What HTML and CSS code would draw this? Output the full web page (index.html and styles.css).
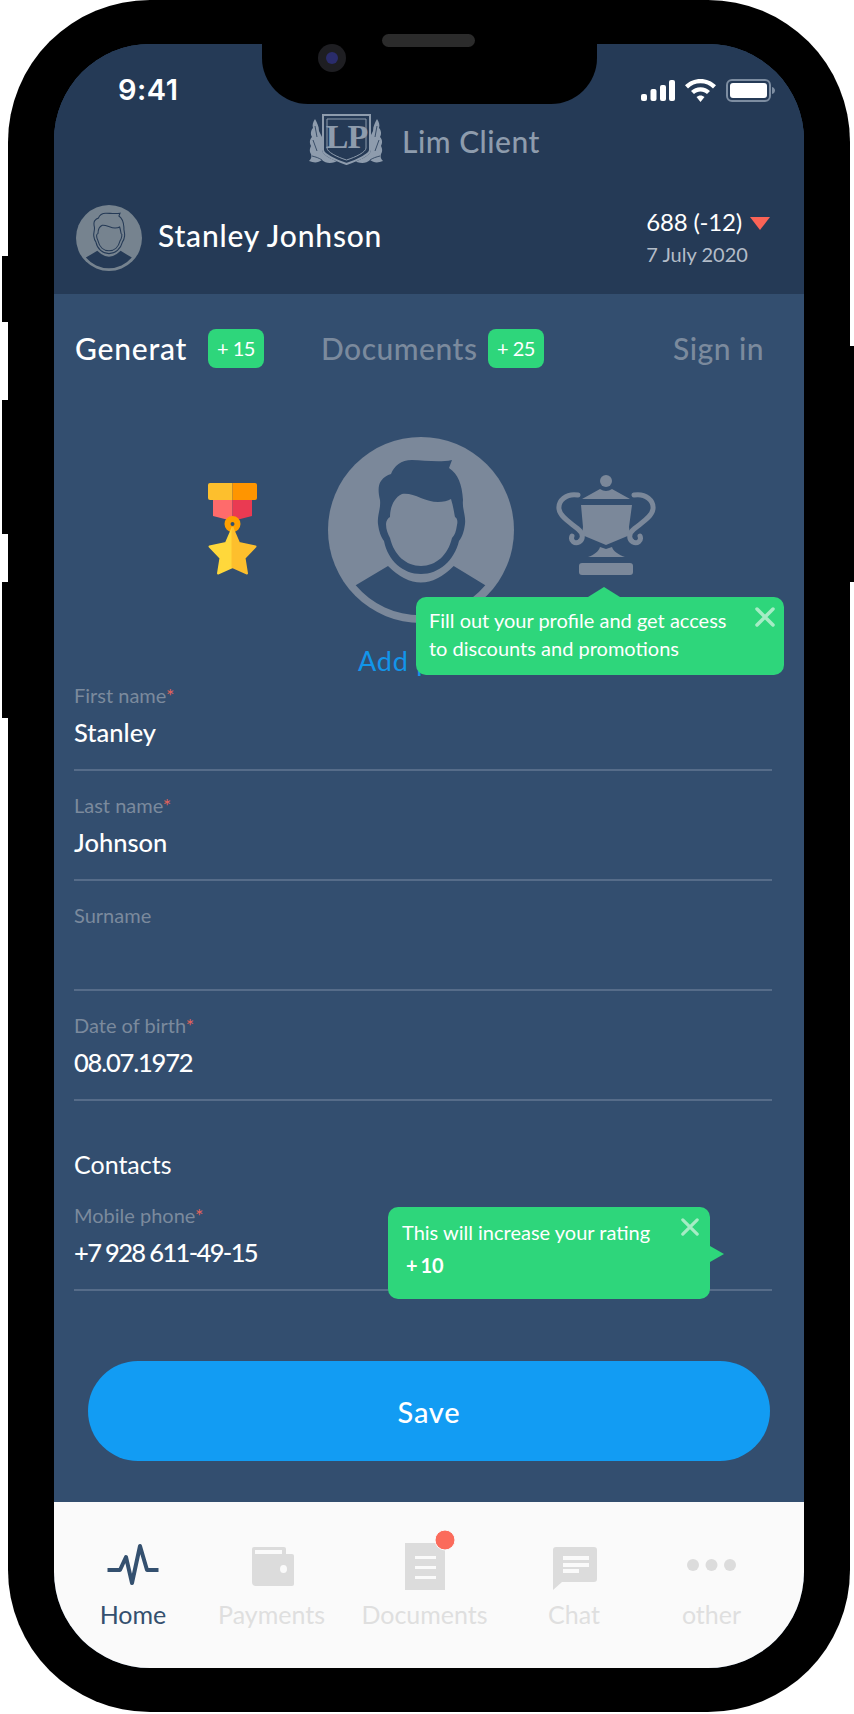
FILE: index.html
```html
<!DOCTYPE html>
<html lang="en">
<head>
<meta charset="utf-8">
<title>Lim Client</title>
<link rel="stylesheet" href="styles.css">
</head>
<body>
<svg class="defs" width="0" height="0" aria-hidden="true">
  <symbol id="person" viewBox="0 0 186 186">
    <circle class="av-bg" cx="93" cy="93" r="93"/>
    <path class="av-body" d="M27.7 148.3L60 129Q93 162 125.7 129L157.3 148.3A85 85 0 0 1 27.7 148.3Z"/>
    <path class="av-head" d="M50 87C49 78 53 72 52 63C50 55 50 48 53 44C56 40 59 38 63 37C66 29 73 23 84 23C96 23 110 26 124 23L121 31C130 37 134 47 135 63C134 72 138 78 137 87C136 95 134 100 131 104C126 124 111 137 93 137C75 137 60 124 56 104C53 100 51 95 50 87Z"/>
    <path class="av-face" d="M58 87C58 84 60 81 62 80C62 72 65 61 74 57C85 55 97 65 110 65C115 65 120 64 123 62C125 68 126 75 127 80C129 81 130 84 129 88C128 94 127 98 124 101C120 118 108 129 93 129C78 129 66 118 62 101C60 97 58 93 58 87Z"/>
  </symbol>
</svg>
<div class="device">
  <span class="btn btn-l1"></span>
  <span class="btn btn-l2"></span>
  <span class="btn btn-l3"></span>
  <span class="btn btn-r1"></span>
  <div class="screen">
    <div class="notch">
      <span class="camera"><span class="lens"></span></span>
    </div>

    <header class="top">
      <div class="status">
        <span class="time">9:41</span>
        <div class="status-icons">
          <svg class="i-signal" viewBox="0 0 34 21"><rect x="0" y="14" width="6" height="7" rx="2"/><rect x="9.500" y="9" width="6" height="12" rx="2"/><rect x="19" y="5" width="6" height="16" rx="2"/><rect x="28" y="0" width="6" height="21" rx="2"/></svg>
          <svg class="i-wifi" viewBox="0 0 31 23"><path d="M15.500 0C21.500 0 27 2.300 31 6.300L28 9.400C24.800 6.200 20.400 4.300 15.500 4.300S6.200 6.200 3 9.400L0 6.300C4 2.300 9.500 0 15.500 0Z"/><path d="M15.500 8.200C19.200 8.200 22.500 9.600 25 12L22 15.100C20.300 13.500 18 12.500 15.500 12.500S10.700 13.500 9 15.100L6 12C8.500 9.600 11.800 8.200 15.500 8.200Z"/><path d="M15.500 16.500C17 16.500 18.400 17.100 19.500 18.100L15.500 23L11.500 18.100C12.600 17.100 14 16.500 15.500 16.500Z"/></svg>
          <svg class="i-batt" viewBox="0 0 49 23"><rect class="batt-edge" x="1" y="1" width="43" height="21" rx="5"/><rect x="4" y="4" width="37" height="15" rx="3"/><path class="batt-nub" d="M46 8C48 8.500 49 10 49 11.500S48 14.500 46 15Z"/></svg>
        </div>
      </div>

      <div class="brand">
        <svg class="crest" viewBox="0 0 74 53">
          <g class="leaves">
            <path d="M6 6C8 10 10 13 10 18L13 24V36C15 40 20 44 30 47C24 51 17 51 13 47C9 50 5 50 0 48C2 46 3 44 2 41C0 38 1 35 2 33C0 29 1 26 3 24C1 21 2 17 4 15C3 12 4 9 6 6Z"/>
            <path transform="matrix(-1 0 0 1 74 0)" d="M6 6C8 10 10 13 10 18L13 24V36C15 40 20 44 30 47C24 51 17 51 13 47C9 50 5 50 0 48C2 46 3 44 2 41C0 38 1 35 2 33C0 29 1 26 3 24C1 21 2 17 4 15C3 12 4 9 6 6Z"/>
          </g>
          <g class="veins">
            <path d="M6 13L8 24M4 27L8 38M3 43C7 44 10 45 13 47"/>
            <path d="M68 13L66 24M70 27L66 38M71 43C67 44 64 45 61 47"/>
          </g>
          <path class="shield-fill" d="M13 1H62V37C62 42 50 48 37.500 52C25 48 13 42 13 37Z"/>
          <path class="shield-line s1" d="M14 2H61V37C61 41 49 47 37.500 51C26 47 14 41 14 37Z"/>
          <path class="shield-line s2" d="M18 6H57V35C57 39 47 44 37.500 47C28 44 18 39 18 35Z"/>
          <text class="crest-text" x="37.500" y="35" text-anchor="middle">LP</text>
        </svg>
        <span class="brand-name">Lim Client</span>
      </div>

      <div class="user">
        <svg class="user-avatar"><use href="#person"/></svg>
        <span class="user-name">Stanley Jonhson</span>
        <div class="rating">
          <div class="rating-line"><span>688 (-12)</span><span class="down"></span></div>
          <div class="rating-date">7 July 2020</div>
        </div>
      </div>
    </header>

    <main class="body">
      <nav class="tabs">
        <span class="tab tab-on">Generat</span>
        <span class="badge badge-a">+ 15</span>
        <span class="tab tab-docs">Documents</span>
        <span class="badge badge-b">+ 25</span>
        <span class="tab tab-sign">Sign in</span>
      </nav>

      <section class="awards">
        <svg class="medal" viewBox="0 0 49 92">
          <path fill="#ff6b6b" d="M5 17V33L24.500 38V17Z"/>
          <path fill="#ea3a52" d="M44 17V33L24.500 38V17Z"/>
          <path fill="#fdbf2d" d="M2 0H24.500V17H2A2 2 0 0 1 0 15V2A2 2 0 0 1 2 0Z"/>
          <path fill="#ff9500" d="M47 0H24.500V17H47A2 2 0 0 0 49 15V2A2 2 0 0 0 47 0Z"/>
          <circle cx="24.500" cy="41" r="5" fill="#32506f" stroke="#ffa000" stroke-width="6"/>
          <path fill="#ffd83b" stroke="#ffd83b" stroke-width="2" stroke-linejoin="round" d="M24.500 45L18 60L1.500 63.500L12.500 75L10 90.500L24.500 84Z"/>
          <path fill="#fdbf2d" stroke="#fdbf2d" stroke-width="2" stroke-linejoin="round" d="M24.500 45L31 60L47.500 63.500L36.500 75L39 90.500L24.500 84Z"/>
        </svg>
        <svg class="photo"><use href="#person"/></svg>
        <svg class="trophy" viewBox="0 0 100 100">
          <circle cx="50" cy="6" r="6"/>
          <path d="M26 24L44 14Q50 18 56 14L74 24Z"/>
          <path d="M25 30H76L73 52L74 60L50 70L26 60L27 52Z"/>
          <path d="M44 72L50 74L56 72C57 76 63 80 69 82H32C38 80 43 76 44 72Z"/>
          <rect x="23" y="88" width="54" height="12" rx="3"/>
          <path class="handle" d="M22 20C10 18 2 26 3 34C4 42 15 48 22 54C27 58 28 64 23 67C19 69 14 66 16 61"/>
          <path class="handle" d="M78 20C90 18 98 26 97 34C96 42 85 48 78 54C73 58 72 64 77 67C81 69 86 66 84 61"/>
        </svg>
      </section>
      <div class="add-photo">Add photo</div>

      <form class="fields">
        <div class="field"><div class="label">First name<i>*</i></div><div class="value">Stanley</div></div>
        <div class="field"><div class="label">Last name<i>*</i></div><div class="value">Johnson</div></div>
        <div class="field"><div class="label">Surname</div><div class="value"></div></div>
        <div class="field"><div class="label">Date of birth<i>*</i></div><div class="value value-date">08.07.1972</div></div>
        <div class="section-title">Contacts</div>
        <div class="field"><div class="label">Mobile phone<i>*</i></div><div class="value value-phone">+7 928 611-49-15</div></div>
      </form>

      <div class="save">Save</div>
    </main>

    <footer class="tabbar">
      <div class="item item-on">
        <svg class="nav-icon" viewBox="0 0 158 64"><polyline class="pulse" points="53.500,40 66,40 72,27 78,53 86,16 93,40 104.500,40"/></svg>
        <span>Home</span>
      </div>
      <div class="item">
        <svg class="nav-icon" viewBox="-1 0 119 64"><path d="M39 19A2 2 0 0 1 41 17H71A2 2 0 0 1 73 19V24H79A2 2 0 0 1 81 26V54A2 2 0 0 1 79 56H43A4 4 0 0 1 39 52Z"/><rect class="cut" x="42" y="20" width="27" height="4"/><ellipse class="cut" cx="70.500" cy="39" rx="3.500" ry="4"/></svg>
        <span>Payments</span>
      </div>
      <div class="item">
        <svg class="nav-icon" viewBox="0 0 187 64"><rect x="74" y="13" width="40" height="47"/><rect class="cut" x="84" y="26" width="21" height="3"/><rect class="cut" x="84" y="36" width="21" height="3"/><rect class="cut" x="84" y="46" width="21" height="3"/><circle class="dot" cx="114" cy="10" r="10"/></svg>
        <span>Documents</span>
      </div>
      <div class="item">
        <svg class="nav-icon" viewBox="2 0 112 64"><path d="M37 20A3 3 0 0 1 40 17H78A3 3 0 0 1 81 20V49A3 3 0 0 1 78 52H46L37 60Z"/><rect class="cut" x="47" y="26" width="26" height="4"/><rect class="cut" x="47" y="33" width="26" height="4"/><rect class="cut" x="47" y="39" width="16" height="4"/></svg>
        <span>Chat</span>
      </div>
      <div class="item">
        <svg class="nav-icon" viewBox="0 0 163 64"><circle cx="63" cy="35" r="6"/><circle cx="81.500" cy="35" r="6"/><circle cx="100" cy="35" r="6"/></svg>
        <span>other</span>
      </div>
    </footer>

    <aside class="tip tip-up">
      <svg class="tip-x tip-x-a" viewBox="0 0 20 20"><path d="M2 2L18 18M18 2L2 18"/></svg>
      <p class="tip-text">Fill out your profile and get access<br>to discounts and promotions</p>
    </aside>
    <aside class="tip tip-side">
      <svg class="tip-x tip-x-b" viewBox="0 0 20 20"><path d="M2 2L18 18M18 2L2 18"/></svg>
      <p class="tip-text">This will increase your rating</p>
      <p class="tip-bonus">+ 10</p>
    </aside>
  </div>
  <span class="speaker"></span>
</div>
</body>
</html>
```
FILE: styles.css
```css
* { box-sizing: border-box; }
html, body { margin: 0; padding: 0; background: #fff; }
body { width: 854px; height: 1714px; overflow: hidden; font-family: "Lato", "Liberation Sans", sans-serif; color: #fff; }
.defs { position: absolute; }

.device { position: relative; width: 842px; height: 1712px; margin-left: 8px; padding: 44px 46px; background: #000; border-radius: 142px; }
.btn { position: absolute; background: #000; }
.btn-l1 { left: -6px; top: 256px; width: 6px; height: 66px; }
.btn-l2 { left: -6px; top: 400px; width: 6px; height: 134px; }
.btn-l3 { left: -6px; top: 582px; width: 6px; height: 136px; }
.btn-r1 { right: -4px; top: 346px; width: 4px; height: 236px; }
.speaker { position: absolute; left: 374px; top: 34px; width: 93px; height: 13px; border-radius: 7px; background: #2b2b2b; }

.screen { position: relative; display: flex; flex-direction: column; width: 750px; height: 1624px; border-radius: 96px; overflow: hidden; background: #334e6f; }

.notch { position: absolute; left: 208px; top: 0; width: 335px; height: 60px; background: #000; border-radius: 0 0 46px 46px; }
.camera { position: absolute; left: 56px; top: 0; width: 28px; height: 28px; border-radius: 50%; background: #1e1e22; display: flex; align-items: center; justify-content: center; }
.lens { width: 12px; height: 12px; border-radius: 50%; background: #2a2c6b; }

.top { height: 250px; flex: none; background: #253a56; }
.status { display: flex; justify-content: space-between; align-items: center; height: 24px; padding: 0 29px 0 64px; position: relative; top: 34px; }
.time { font-family: "Inter", sans-serif; font-weight: 600; font-size: 29px; line-height: 24px; letter-spacing: 0.5px; }
.status-icons { display: flex; align-items: center; }
.status-icons svg { display: block; fill: #fff; }
.i-signal { width: 34px; height: 21px; }
.i-wifi { width: 31px; height: 23px; margin-left: 10px; }
.i-batt { width: 49px; height: 23px; margin-left: 10px; }
.batt-edge { fill: none !important; stroke: #7d8da1; stroke-width: 2; }
.batt-nub { fill: #7d8da1 !important; }

.brand { display: flex; align-items: center; height: 53px; margin-top: 45px; padding-left: 255px; }
.crest { width: 74px; height: 53px; }
.leaves path { fill: #8e9cad; }
.veins path { fill: none; stroke: #253a56; stroke-width: 0.8; }
.shield-fill { fill: #253a56; }
.shield-line { fill: none; stroke: #8e9cad; }
.s1 { stroke-width: 2; }
.s2 { stroke-width: 1; }
.crest-text { font-family: "Liberation Serif", serif; font-weight: 700; font-size: 34px; letter-spacing: -1px; fill: #8e9cad; }
.brand-name { margin-left: 19px; padding-top: 2px; font-size: 30px; font-weight: 500; color: #8e9cad; letter-spacing: 0.5px; }

.user { display: flex; align-items: center; height: 66px; margin-top: 39px; padding: 0 34px 0 22px; }
.user-avatar { width: 66px; height: 66px; flex: none; --av-light: #76838f; --av-dark: #253a56; --av-head: #76838f; --av-line: 3; }
.av-bg { fill: var(--av-light, #7b889a); }
.av-body { fill: var(--av-dark, #334e6f); }
.av-head { fill: var(--av-head, #334e6f); stroke: var(--av-dark, #334e6f); stroke-width: var(--av-line, 0); }
.av-face { fill: var(--av-light, #7b889a); stroke: var(--av-dark, #334e6f); stroke-width: var(--av-line, 0); }
.user-name { margin-left: 16px; padding-bottom: 6px; font-size: 30px; font-weight: 500; letter-spacing: 0.8px; }
.rating { margin-left: auto; padding-bottom: 2px; }
.rating-line { display: flex; align-items: center; justify-content: flex-end; font-size: 24px; line-height: 30px; letter-spacing: -0.2px; }
.down { width: 0; height: 0; margin-left: 8px; margin-top: 2px; border-left: 10px solid transparent; border-right: 10px solid transparent; border-top: 13px solid #fb6356; }
.rating-date { margin-top: 4px; font-size: 20px; line-height: 26px; color: #b3bcc8; }

.body { flex: 1; display: flex; flex-direction: column; background: #334e6f; }

.tabs { display: flex; align-items: center; height: 39px; margin-top: 35px; padding-left: 21px; }
.tab { padding-bottom: 2px; font-size: 30px; font-weight: 500; letter-spacing: 0.5px; color: #7b8a9d; }
.tab-on { color: #fff; width: 133px; letter-spacing: 0.8px; }
.tab-docs { margin-left: 57px; width: 167px; }
.tab-sign { margin-left: 129px; }
.badge { width: 56px; height: 39px; border-radius: 8px; background: #2ed67b; font-size: 20px; letter-spacing: -0.5px; line-height: 39px; text-align: center; color: #fff; }

.awards { display: flex; align-items: flex-end; height: 186px; margin-top: 69px; padding-left: 154px; }
.medal { width: 49px; height: 92px; margin-bottom: 48px; }
.photo { width: 186px; height: 186px; margin-left: 71px; }
.trophy { width: 100px; height: 100px; margin-left: 42px; margin-bottom: 48px; fill: #7b889a; }
.handle { fill: none; stroke: #7b889a; stroke-width: 5; stroke-linecap: round; }

.add-photo { height: 37px; margin-top: 21px; padding-left: 304px; font-size: 27px; line-height: 34px; letter-spacing: 0.8px; color: #1295ea; }

.fields { display: flex; flex-direction: column; gap: 20px; padding: 0 32px 0 20px; }
.field { height: 90px; padding-top: 2px; border-bottom: 2px solid #566c89; }
.label { height: 26px; font-size: 20px; line-height: 24px; color: #7b8a9d; }
.label i { font-style: normal; color: #e2625a; }
.value { height: 38px; padding-top: 7px; font-size: 25.500px; line-height: 32px; font-weight: 500; color: #fff; }
.value-date { letter-spacing: -1.200px; }
.value-phone { letter-spacing: -1.650px; }
.section-title { height: 60px; padding-top: 26px; font-size: 25px; line-height: 34px; }

.save { flex: none; height: 100px; margin: 70px 34px 0; border-radius: 50px; background: #129cf3; font-size: 29px; font-weight: 500; letter-spacing: 0.8px; line-height: 102px; text-align: center; }

.tabbar { flex: none; height: 166px; display: grid; grid-template-columns: 158px 119px 187px 112px 163px; padding-top: 28px; background: #fafafa; }
.item { display: flex; flex-direction: column; align-items: center; font-size: 25px; line-height: 30px; color: #dfdfdf; }
.item-on { color: #34506f; }
.nav-icon { display: block; width: 100%; height: 64px; margin-bottom: 5px; fill: #dcdcdc; }
.pulse { fill: none; stroke: #34506f; stroke-width: 4; stroke-linejoin: round; }
.cut { fill: #fafafa; }
.dot { fill: #fb6b5b; stroke: #fafafa; stroke-width: 1; }

.tip { position: absolute; background: #2ed67b; border-radius: 10px; color: #fff; }
.tip::before { content: ""; position: absolute; width: 0; height: 0; }
.tip-up { left: 362px; top: 553px; width: 368px; height: 78px; padding: 9px 13px; }
.tip-up::before { left: 172px; top: -10px; border-left: 16px solid transparent; border-right: 16px solid transparent; border-bottom: 10px solid #2ed67b; }
.tip-side { left: 334px; top: 1163px; width: 322px; height: 92px; padding: 11px 14px; }
.tip-side::before { right: -14px; top: 39px; border-top: 8px solid transparent; border-bottom: 8px solid transparent; border-left: 14px solid #2ed67b; }
.tip-text { margin: 0; font-size: 20px; line-height: 28px; }
.tip-bonus { margin: 5px 0 0 4px; font-size: 20px; line-height: 28px; font-weight: 700; word-spacing: -2px; }
.tip-x { position: absolute; fill: none; stroke: #a6ecc5; stroke-width: 3.500; stroke-linecap: round; }
.tip-x-a { right: 9px; top: 10px; width: 20px; height: 20px; }
.tip-x-b { right: 11px; top: 11px; width: 18px; height: 18px; }
```
